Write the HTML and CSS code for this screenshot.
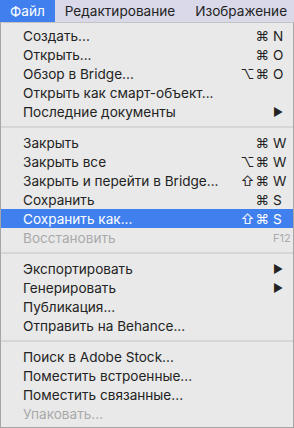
FILE: index.html
```html
<!DOCTYPE html>
<html lang="ru">
<head>
  <meta charset="UTF-8">
  <meta name="viewport" content="width=device-width, initial-scale=1.0">
  <title>Файл</title>
  <link rel="stylesheet" href="styles.css">
</head>
<body>
  <div class="menubar">
    <span class="menubar-item active">Файл</span>
    <span class="menubar-item">Редактирование</span>
    <span class="menubar-item">Изображение</span>
  </div>

  <div class="menu">
    <div class="item"><span class="label">Создать...</span><span class="mods">⌘</span><span class="key">N</span></div>
    <div class="item"><span class="label">Открыть...</span><span class="mods">⌘</span><span class="key">O</span></div>
    <div class="item"><span class="label">Обзор в Bridge...</span><span class="mods">⌥⌘</span><span class="key">O</span></div>
    <div class="item"><span class="label">Открыть как смарт-объект...</span></div>
    <div class="item"><span class="label">Последние документы</span><span class="arrow">▶</span></div>

    <div class="separator"></div>

    <div class="item"><span class="label">Закрыть</span><span class="mods">⌘</span><span class="key">W</span></div>
    <div class="item"><span class="label">Закрыть все</span><span class="mods">⌥⌘</span><span class="key">W</span></div>
    <div class="item"><span class="label">Закрыть и перейти в Bridge...</span><span class="mods">⇧⌘</span><span class="key">W</span></div>
    <div class="item"><span class="label">Сохранить</span><span class="mods">⌘</span><span class="key">S</span></div>
    <div class="item selected"><span class="label">Сохранить как...</span><span class="mods">⇧⌘</span><span class="key">S</span></div>
    <div class="item disabled"><span class="label">Восстановить</span><span class="key small">F12</span></div>

    <div class="separator"></div>

    <div class="item"><span class="label">Экспортировать</span><span class="arrow">▶</span></div>
    <div class="item"><span class="label">Генерировать</span><span class="arrow">▶</span></div>
    <div class="item"><span class="label">Публикация...</span></div>
    <div class="item"><span class="label">Отправить на Behance...</span></div>

    <div class="separator"></div>

    <div class="item"><span class="label">Поиск в Adobe Stock...</span></div>
    <div class="item"><span class="label">Поместить встроенные...</span></div>
    <div class="item"><span class="label">Поместить связанные...</span></div>
    <div class="item disabled"><span class="label">Упаковать...</span></div>
  </div>
</body>
</html>
```

FILE: styles.css
```css
* {
  box-sizing: border-box;
  margin: 0;
  padding: 0;
}

body {
  font-family: Inter, "Liberation Sans", Arial, sans-serif;
  font-size: 13.6px;
  color: #232323;
  background-color: #e9e9e9;
  width: 294px;
  height: 428px;
  overflow: hidden;
}

.menubar {
  display: flex;
  height: 22px;
  background-color: #d9d9e9;
}

.menubar-item {
  display: flex;
  align-items: center;
  padding: 0 10px;
  white-space: nowrap;
}

.menubar-item.active {
  background-color: #3f7fee;
  color: white;
}

.menu {
  height: 406px;
  background-color: #e9e9e9;
  border: 1px solid #a6a6a6;
  border-top-color: #c4c4c4;
  padding-top: 3px;
}

.item {
  display: flex;
  align-items: center;
  height: 19px;
  padding-left: 22px;
  padding-right: 3px;
  white-space: nowrap;
}

.item .label {
  flex: 1;
}

.mods {
  text-align: right;
  padding-right: 3px;
  letter-spacing: 1px;
}

.key {
  width: 17px;
}

.key.small {
  font-size: 11px;
  width: 17px;
}

.arrow {
  width: 17px;
  font-size: 11px;
}

.item.selected {
  background-color: #3f7fee;
  color: white;
}

.item.disabled {
  color: #a9a9a9;
}

.separator {
  height: 12px;
  display: flex;
  align-items: center;
}

.separator::after {
  content: "";
  flex: 1;
  height: 2px;
  background-color: #d6d6d6;
}
```
